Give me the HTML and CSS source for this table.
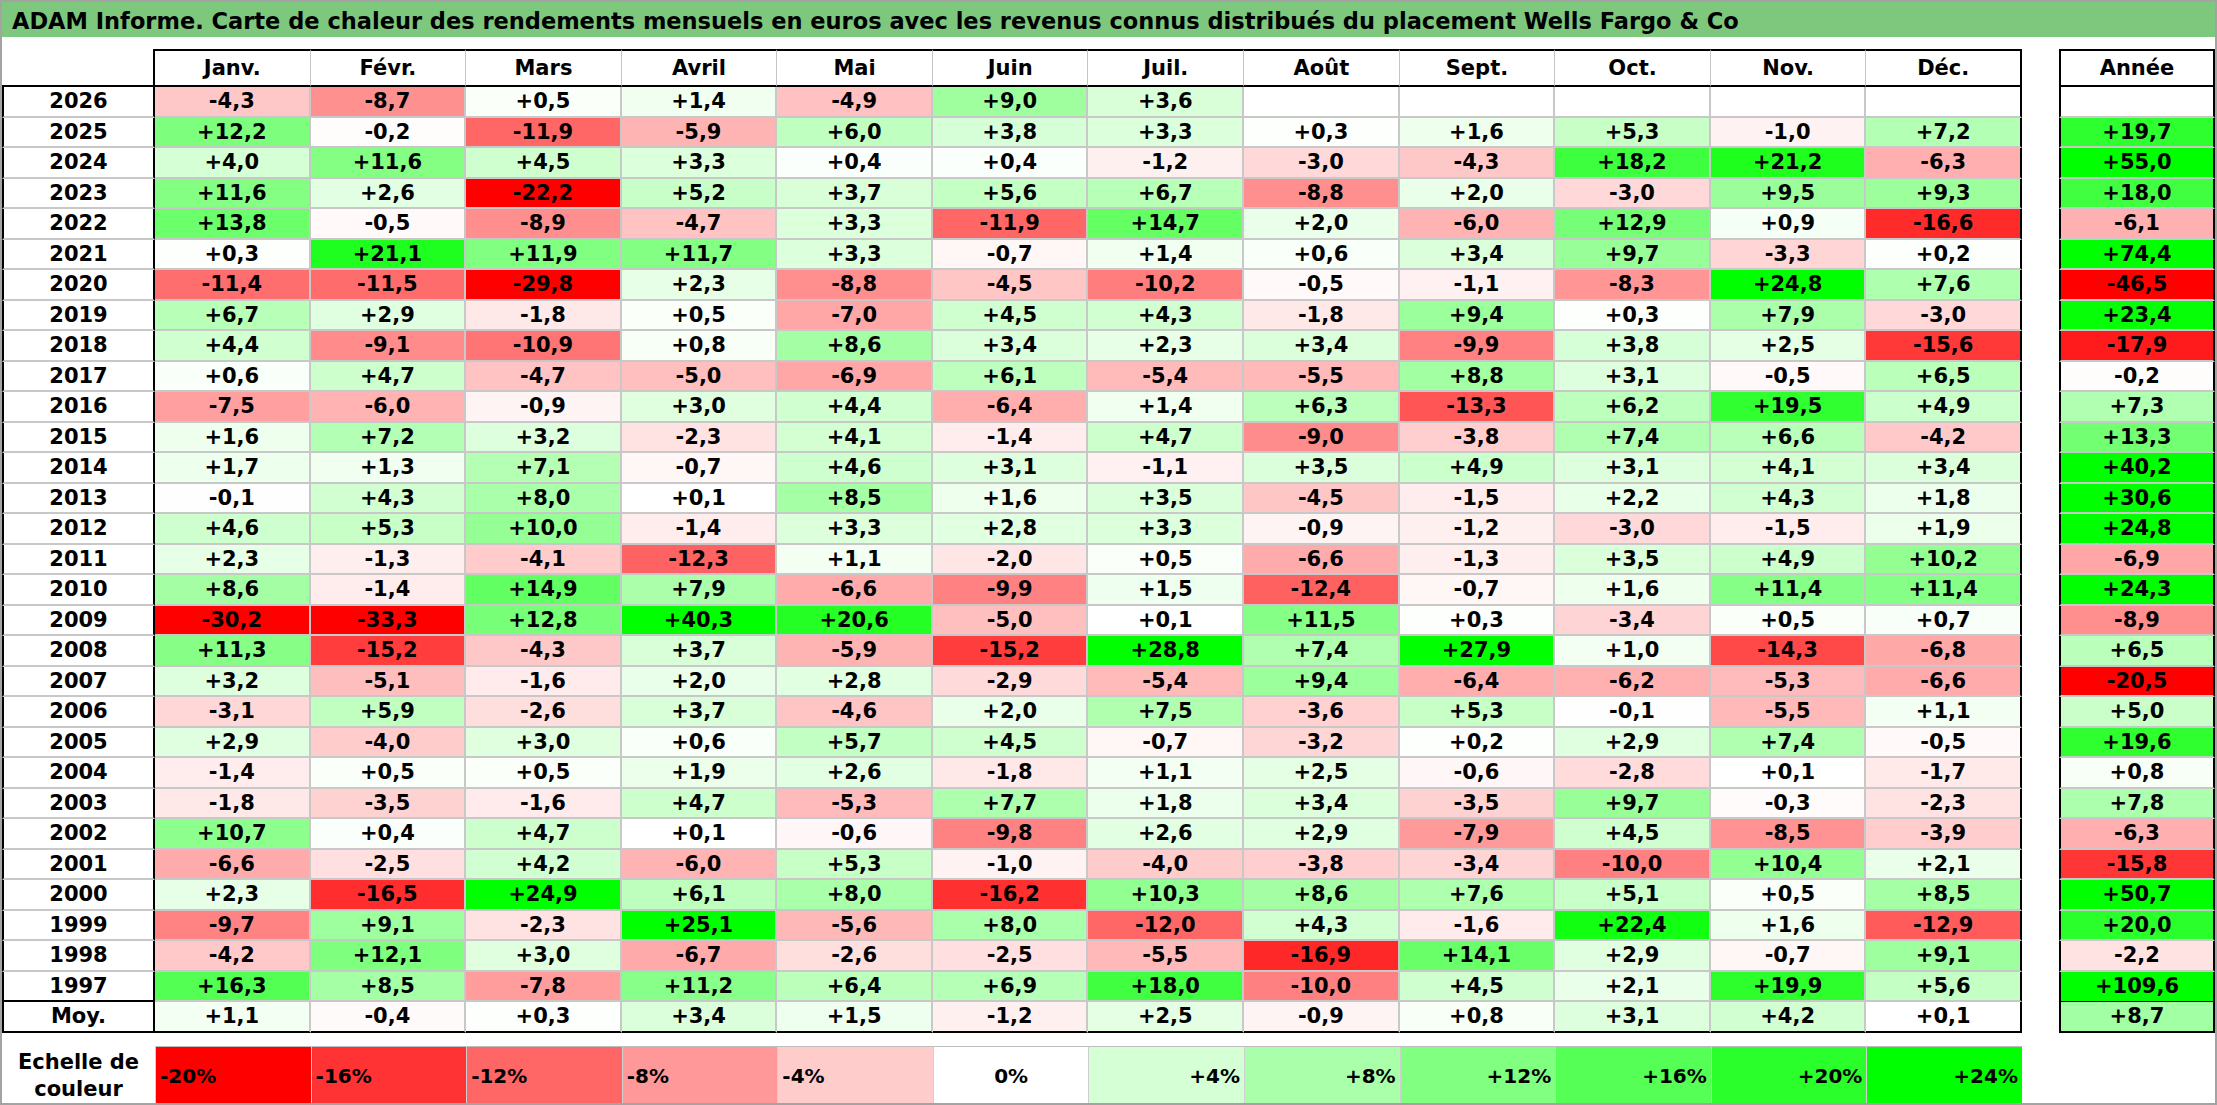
FILE: index.html
```html
<!DOCTYPE html>
<html lang="fr">
<head>
<meta charset="utf-8">
<title>ADAM Informe – Wells Fargo &amp; Co</title>
<link rel="stylesheet" href="styles.css">
</head>
<body>
<div class="page">
  <div class="title">ADAM Informe. Carte de chaleur des rendements mensuels en euros avec les revenus connus distribués du placement Wells Fargo &amp; Co</div>
  <div class="tables">
    <div class="grid main">
      <div class="corner"></div>
      <div class="mh">Janv.</div><div class="mh">Févr.</div><div class="mh">Mars</div><div class="mh">Avril</div><div class="mh">Mai</div><div class="mh">Juin</div><div class="mh">Juil.</div><div class="mh">Août</div><div class="mh">Sept.</div><div class="mh">Oct.</div><div class="mh">Nov.</div><div class="mh d">Déc.</div>

      <div class="yl">2026</div>
      <div class="c" style="--v:-4.3">-4,3</div><div class="c" style="--v:-8.7">-8,7</div><div class="c" style="--v:0.5">+0,5</div><div class="c" style="--v:1.4">+1,4</div><div class="c" style="--v:-4.9">-4,9</div><div class="c" style="--v:9.0">+9,0</div><div class="c" style="--v:3.6">+3,6</div><div class="c"></div><div class="c"></div><div class="c"></div><div class="c"></div><div class="c d"></div>

      <div class="yl">2025</div>
      <div class="c" style="--v:12.2">+12,2</div><div class="c" style="--v:-0.2">-0,2</div><div class="c" style="--v:-11.9">-11,9</div><div class="c" style="--v:-5.9">-5,9</div><div class="c" style="--v:6.0">+6,0</div><div class="c" style="--v:3.8">+3,8</div><div class="c" style="--v:3.3">+3,3</div><div class="c" style="--v:0.3">+0,3</div><div class="c" style="--v:1.6">+1,6</div><div class="c" style="--v:5.3">+5,3</div><div class="c" style="--v:-1.0">-1,0</div><div class="c d" style="--v:7.2">+7,2</div>

      <div class="yl">2024</div>
      <div class="c" style="--v:4.0">+4,0</div><div class="c" style="--v:11.6">+11,6</div><div class="c" style="--v:4.5">+4,5</div><div class="c" style="--v:3.3">+3,3</div><div class="c" style="--v:0.4">+0,4</div><div class="c" style="--v:0.4">+0,4</div><div class="c" style="--v:-1.2">-1,2</div><div class="c" style="--v:-3.0">-3,0</div><div class="c" style="--v:-4.3">-4,3</div><div class="c" style="--v:18.2">+18,2</div><div class="c" style="--v:21.2">+21,2</div><div class="c d" style="--v:-6.3">-6,3</div>

      <div class="yl">2023</div>
      <div class="c" style="--v:11.6">+11,6</div><div class="c" style="--v:2.6">+2,6</div><div class="c" style="--v:-22.2">-22,2</div><div class="c" style="--v:5.2">+5,2</div><div class="c" style="--v:3.7">+3,7</div><div class="c" style="--v:5.6">+5,6</div><div class="c" style="--v:6.7">+6,7</div><div class="c" style="--v:-8.8">-8,8</div><div class="c" style="--v:2.0">+2,0</div><div class="c" style="--v:-3.0">-3,0</div><div class="c" style="--v:9.5">+9,5</div><div class="c d" style="--v:9.3">+9,3</div>

      <div class="yl">2022</div>
      <div class="c" style="--v:13.8">+13,8</div><div class="c" style="--v:-0.5">-0,5</div><div class="c" style="--v:-8.9">-8,9</div><div class="c" style="--v:-4.7">-4,7</div><div class="c" style="--v:3.3">+3,3</div><div class="c" style="--v:-11.9">-11,9</div><div class="c" style="--v:14.7">+14,7</div><div class="c" style="--v:2.0">+2,0</div><div class="c" style="--v:-6.0">-6,0</div><div class="c" style="--v:12.9">+12,9</div><div class="c" style="--v:0.9">+0,9</div><div class="c d" style="--v:-16.6">-16,6</div>

      <div class="yl">2021</div>
      <div class="c" style="--v:0.3">+0,3</div><div class="c" style="--v:21.1">+21,1</div><div class="c" style="--v:11.9">+11,9</div><div class="c" style="--v:11.7">+11,7</div><div class="c" style="--v:3.3">+3,3</div><div class="c" style="--v:-0.7">-0,7</div><div class="c" style="--v:1.4">+1,4</div><div class="c" style="--v:0.6">+0,6</div><div class="c" style="--v:3.4">+3,4</div><div class="c" style="--v:9.7">+9,7</div><div class="c" style="--v:-3.3">-3,3</div><div class="c d" style="--v:0.2">+0,2</div>

      <div class="yl">2020</div>
      <div class="c" style="--v:-11.4">-11,4</div><div class="c" style="--v:-11.5">-11,5</div><div class="c" style="--v:-29.8">-29,8</div><div class="c" style="--v:2.3">+2,3</div><div class="c" style="--v:-8.8">-8,8</div><div class="c" style="--v:-4.5">-4,5</div><div class="c" style="--v:-10.2">-10,2</div><div class="c" style="--v:-0.5">-0,5</div><div class="c" style="--v:-1.1">-1,1</div><div class="c" style="--v:-8.3">-8,3</div><div class="c" style="--v:24.8">+24,8</div><div class="c d" style="--v:7.6">+7,6</div>

      <div class="yl">2019</div>
      <div class="c" style="--v:6.7">+6,7</div><div class="c" style="--v:2.9">+2,9</div><div class="c" style="--v:-1.8">-1,8</div><div class="c" style="--v:0.5">+0,5</div><div class="c" style="--v:-7.0">-7,0</div><div class="c" style="--v:4.5">+4,5</div><div class="c" style="--v:4.3">+4,3</div><div class="c" style="--v:-1.8">-1,8</div><div class="c" style="--v:9.4">+9,4</div><div class="c" style="--v:0.3">+0,3</div><div class="c" style="--v:7.9">+7,9</div><div class="c d" style="--v:-3.0">-3,0</div>

      <div class="yl">2018</div>
      <div class="c" style="--v:4.4">+4,4</div><div class="c" style="--v:-9.1">-9,1</div><div class="c" style="--v:-10.9">-10,9</div><div class="c" style="--v:0.8">+0,8</div><div class="c" style="--v:8.6">+8,6</div><div class="c" style="--v:3.4">+3,4</div><div class="c" style="--v:2.3">+2,3</div><div class="c" style="--v:3.4">+3,4</div><div class="c" style="--v:-9.9">-9,9</div><div class="c" style="--v:3.8">+3,8</div><div class="c" style="--v:2.5">+2,5</div><div class="c d" style="--v:-15.6">-15,6</div>

      <div class="yl">2017</div>
      <div class="c" style="--v:0.6">+0,6</div><div class="c" style="--v:4.7">+4,7</div><div class="c" style="--v:-4.7">-4,7</div><div class="c" style="--v:-5.0">-5,0</div><div class="c" style="--v:-6.9">-6,9</div><div class="c" style="--v:6.1">+6,1</div><div class="c" style="--v:-5.4">-5,4</div><div class="c" style="--v:-5.5">-5,5</div><div class="c" style="--v:8.8">+8,8</div><div class="c" style="--v:3.1">+3,1</div><div class="c" style="--v:-0.5">-0,5</div><div class="c d" style="--v:6.5">+6,5</div>

      <div class="yl">2016</div>
      <div class="c" style="--v:-7.5">-7,5</div><div class="c" style="--v:-6.0">-6,0</div><div class="c" style="--v:-0.9">-0,9</div><div class="c" style="--v:3.0">+3,0</div><div class="c" style="--v:4.4">+4,4</div><div class="c" style="--v:-6.4">-6,4</div><div class="c" style="--v:1.4">+1,4</div><div class="c" style="--v:6.3">+6,3</div><div class="c" style="--v:-13.3">-13,3</div><div class="c" style="--v:6.2">+6,2</div><div class="c" style="--v:19.5">+19,5</div><div class="c d" style="--v:4.9">+4,9</div>

      <div class="yl">2015</div>
      <div class="c" style="--v:1.6">+1,6</div><div class="c" style="--v:7.2">+7,2</div><div class="c" style="--v:3.2">+3,2</div><div class="c" style="--v:-2.3">-2,3</div><div class="c" style="--v:4.1">+4,1</div><div class="c" style="--v:-1.4">-1,4</div><div class="c" style="--v:4.7">+4,7</div><div class="c" style="--v:-9.0">-9,0</div><div class="c" style="--v:-3.8">-3,8</div><div class="c" style="--v:7.4">+7,4</div><div class="c" style="--v:6.6">+6,6</div><div class="c d" style="--v:-4.2">-4,2</div>

      <div class="yl">2014</div>
      <div class="c" style="--v:1.7">+1,7</div><div class="c" style="--v:1.3">+1,3</div><div class="c" style="--v:7.1">+7,1</div><div class="c" style="--v:-0.7">-0,7</div><div class="c" style="--v:4.6">+4,6</div><div class="c" style="--v:3.1">+3,1</div><div class="c" style="--v:-1.1">-1,1</div><div class="c" style="--v:3.5">+3,5</div><div class="c" style="--v:4.9">+4,9</div><div class="c" style="--v:3.1">+3,1</div><div class="c" style="--v:4.1">+4,1</div><div class="c d" style="--v:3.4">+3,4</div>

      <div class="yl">2013</div>
      <div class="c" style="--v:-0.1">-0,1</div><div class="c" style="--v:4.3">+4,3</div><div class="c" style="--v:8.0">+8,0</div><div class="c" style="--v:0.1">+0,1</div><div class="c" style="--v:8.5">+8,5</div><div class="c" style="--v:1.6">+1,6</div><div class="c" style="--v:3.5">+3,5</div><div class="c" style="--v:-4.5">-4,5</div><div class="c" style="--v:-1.5">-1,5</div><div class="c" style="--v:2.2">+2,2</div><div class="c" style="--v:4.3">+4,3</div><div class="c d" style="--v:1.8">+1,8</div>

      <div class="yl">2012</div>
      <div class="c" style="--v:4.6">+4,6</div><div class="c" style="--v:5.3">+5,3</div><div class="c" style="--v:10.0">+10,0</div><div class="c" style="--v:-1.4">-1,4</div><div class="c" style="--v:3.3">+3,3</div><div class="c" style="--v:2.8">+2,8</div><div class="c" style="--v:3.3">+3,3</div><div class="c" style="--v:-0.9">-0,9</div><div class="c" style="--v:-1.2">-1,2</div><div class="c" style="--v:-3.0">-3,0</div><div class="c" style="--v:-1.5">-1,5</div><div class="c d" style="--v:1.9">+1,9</div>

      <div class="yl">2011</div>
      <div class="c" style="--v:2.3">+2,3</div><div class="c" style="--v:-1.3">-1,3</div><div class="c" style="--v:-4.1">-4,1</div><div class="c" style="--v:-12.3">-12,3</div><div class="c" style="--v:1.1">+1,1</div><div class="c" style="--v:-2.0">-2,0</div><div class="c" style="--v:0.5">+0,5</div><div class="c" style="--v:-6.6">-6,6</div><div class="c" style="--v:-1.3">-1,3</div><div class="c" style="--v:3.5">+3,5</div><div class="c" style="--v:4.9">+4,9</div><div class="c d" style="--v:10.2">+10,2</div>

      <div class="yl">2010</div>
      <div class="c" style="--v:8.6">+8,6</div><div class="c" style="--v:-1.4">-1,4</div><div class="c" style="--v:14.9">+14,9</div><div class="c" style="--v:7.9">+7,9</div><div class="c" style="--v:-6.6">-6,6</div><div class="c" style="--v:-9.9">-9,9</div><div class="c" style="--v:1.5">+1,5</div><div class="c" style="--v:-12.4">-12,4</div><div class="c" style="--v:-0.7">-0,7</div><div class="c" style="--v:1.6">+1,6</div><div class="c" style="--v:11.4">+11,4</div><div class="c d" style="--v:11.4">+11,4</div>

      <div class="yl">2009</div>
      <div class="c" style="--v:-30.2">-30,2</div><div class="c" style="--v:-33.3">-33,3</div><div class="c" style="--v:12.8">+12,8</div><div class="c" style="--v:40.3">+40,3</div><div class="c" style="--v:20.6">+20,6</div><div class="c" style="--v:-5.0">-5,0</div><div class="c" style="--v:0.1">+0,1</div><div class="c" style="--v:11.5">+11,5</div><div class="c" style="--v:0.3">+0,3</div><div class="c" style="--v:-3.4">-3,4</div><div class="c" style="--v:0.5">+0,5</div><div class="c d" style="--v:0.7">+0,7</div>

      <div class="yl">2008</div>
      <div class="c" style="--v:11.3">+11,3</div><div class="c" style="--v:-15.2">-15,2</div><div class="c" style="--v:-4.3">-4,3</div><div class="c" style="--v:3.7">+3,7</div><div class="c" style="--v:-5.9">-5,9</div><div class="c" style="--v:-15.2">-15,2</div><div class="c" style="--v:28.8">+28,8</div><div class="c" style="--v:7.4">+7,4</div><div class="c" style="--v:27.9">+27,9</div><div class="c" style="--v:1.0">+1,0</div><div class="c" style="--v:-14.3">-14,3</div><div class="c d" style="--v:-6.8">-6,8</div>

      <div class="yl">2007</div>
      <div class="c" style="--v:3.2">+3,2</div><div class="c" style="--v:-5.1">-5,1</div><div class="c" style="--v:-1.6">-1,6</div><div class="c" style="--v:2.0">+2,0</div><div class="c" style="--v:2.8">+2,8</div><div class="c" style="--v:-2.9">-2,9</div><div class="c" style="--v:-5.4">-5,4</div><div class="c" style="--v:9.4">+9,4</div><div class="c" style="--v:-6.4">-6,4</div><div class="c" style="--v:-6.2">-6,2</div><div class="c" style="--v:-5.3">-5,3</div><div class="c d" style="--v:-6.6">-6,6</div>

      <div class="yl">2006</div>
      <div class="c" style="--v:-3.1">-3,1</div><div class="c" style="--v:5.9">+5,9</div><div class="c" style="--v:-2.6">-2,6</div><div class="c" style="--v:3.7">+3,7</div><div class="c" style="--v:-4.6">-4,6</div><div class="c" style="--v:2.0">+2,0</div><div class="c" style="--v:7.5">+7,5</div><div class="c" style="--v:-3.6">-3,6</div><div class="c" style="--v:5.3">+5,3</div><div class="c" style="--v:-0.1">-0,1</div><div class="c" style="--v:-5.5">-5,5</div><div class="c d" style="--v:1.1">+1,1</div>

      <div class="yl">2005</div>
      <div class="c" style="--v:2.9">+2,9</div><div class="c" style="--v:-4.0">-4,0</div><div class="c" style="--v:3.0">+3,0</div><div class="c" style="--v:0.6">+0,6</div><div class="c" style="--v:5.7">+5,7</div><div class="c" style="--v:4.5">+4,5</div><div class="c" style="--v:-0.7">-0,7</div><div class="c" style="--v:-3.2">-3,2</div><div class="c" style="--v:0.2">+0,2</div><div class="c" style="--v:2.9">+2,9</div><div class="c" style="--v:7.4">+7,4</div><div class="c d" style="--v:-0.5">-0,5</div>

      <div class="yl">2004</div>
      <div class="c" style="--v:-1.4">-1,4</div><div class="c" style="--v:0.5">+0,5</div><div class="c" style="--v:0.5">+0,5</div><div class="c" style="--v:1.9">+1,9</div><div class="c" style="--v:2.6">+2,6</div><div class="c" style="--v:-1.8">-1,8</div><div class="c" style="--v:1.1">+1,1</div><div class="c" style="--v:2.5">+2,5</div><div class="c" style="--v:-0.6">-0,6</div><div class="c" style="--v:-2.8">-2,8</div><div class="c" style="--v:0.1">+0,1</div><div class="c d" style="--v:-1.7">-1,7</div>

      <div class="yl">2003</div>
      <div class="c" style="--v:-1.8">-1,8</div><div class="c" style="--v:-3.5">-3,5</div><div class="c" style="--v:-1.6">-1,6</div><div class="c" style="--v:4.7">+4,7</div><div class="c" style="--v:-5.3">-5,3</div><div class="c" style="--v:7.7">+7,7</div><div class="c" style="--v:1.8">+1,8</div><div class="c" style="--v:3.4">+3,4</div><div class="c" style="--v:-3.5">-3,5</div><div class="c" style="--v:9.7">+9,7</div><div class="c" style="--v:-0.3">-0,3</div><div class="c d" style="--v:-2.3">-2,3</div>

      <div class="yl">2002</div>
      <div class="c" style="--v:10.7">+10,7</div><div class="c" style="--v:0.4">+0,4</div><div class="c" style="--v:4.7">+4,7</div><div class="c" style="--v:0.1">+0,1</div><div class="c" style="--v:-0.6">-0,6</div><div class="c" style="--v:-9.8">-9,8</div><div class="c" style="--v:2.6">+2,6</div><div class="c" style="--v:2.9">+2,9</div><div class="c" style="--v:-7.9">-7,9</div><div class="c" style="--v:4.5">+4,5</div><div class="c" style="--v:-8.5">-8,5</div><div class="c d" style="--v:-3.9">-3,9</div>

      <div class="yl">2001</div>
      <div class="c" style="--v:-6.6">-6,6</div><div class="c" style="--v:-2.5">-2,5</div><div class="c" style="--v:4.2">+4,2</div><div class="c" style="--v:-6.0">-6,0</div><div class="c" style="--v:5.3">+5,3</div><div class="c" style="--v:-1.0">-1,0</div><div class="c" style="--v:-4.0">-4,0</div><div class="c" style="--v:-3.8">-3,8</div><div class="c" style="--v:-3.4">-3,4</div><div class="c" style="--v:-10.0">-10,0</div><div class="c" style="--v:10.4">+10,4</div><div class="c d" style="--v:2.1">+2,1</div>

      <div class="yl">2000</div>
      <div class="c" style="--v:2.3">+2,3</div><div class="c" style="--v:-16.5">-16,5</div><div class="c" style="--v:24.9">+24,9</div><div class="c" style="--v:6.1">+6,1</div><div class="c" style="--v:8.0">+8,0</div><div class="c" style="--v:-16.2">-16,2</div><div class="c" style="--v:10.3">+10,3</div><div class="c" style="--v:8.6">+8,6</div><div class="c" style="--v:7.6">+7,6</div><div class="c" style="--v:5.1">+5,1</div><div class="c" style="--v:0.5">+0,5</div><div class="c d" style="--v:8.5">+8,5</div>

      <div class="yl">1999</div>
      <div class="c" style="--v:-9.7">-9,7</div><div class="c" style="--v:9.1">+9,1</div><div class="c" style="--v:-2.3">-2,3</div><div class="c" style="--v:25.1">+25,1</div><div class="c" style="--v:-5.6">-5,6</div><div class="c" style="--v:8.0">+8,0</div><div class="c" style="--v:-12.0">-12,0</div><div class="c" style="--v:4.3">+4,3</div><div class="c" style="--v:-1.6">-1,6</div><div class="c" style="--v:22.4">+22,4</div><div class="c" style="--v:1.6">+1,6</div><div class="c d" style="--v:-12.9">-12,9</div>

      <div class="yl">1998</div>
      <div class="c" style="--v:-4.2">-4,2</div><div class="c" style="--v:12.1">+12,1</div><div class="c" style="--v:3.0">+3,0</div><div class="c" style="--v:-6.7">-6,7</div><div class="c" style="--v:-2.6">-2,6</div><div class="c" style="--v:-2.5">-2,5</div><div class="c" style="--v:-5.5">-5,5</div><div class="c" style="--v:-16.9">-16,9</div><div class="c" style="--v:14.1">+14,1</div><div class="c" style="--v:2.9">+2,9</div><div class="c" style="--v:-0.7">-0,7</div><div class="c d" style="--v:9.1">+9,1</div>

      <div class="yl last">1997</div>
      <div class="c" style="--v:16.3">+16,3</div><div class="c" style="--v:8.5">+8,5</div><div class="c" style="--v:-7.8">-7,8</div><div class="c" style="--v:11.2">+11,2</div><div class="c" style="--v:6.4">+6,4</div><div class="c" style="--v:6.9">+6,9</div><div class="c" style="--v:18.0">+18,0</div><div class="c" style="--v:-10.0">-10,0</div><div class="c" style="--v:4.5">+4,5</div><div class="c" style="--v:2.1">+2,1</div><div class="c" style="--v:19.9">+19,9</div><div class="c d" style="--v:5.6">+5,6</div>

      <div class="yl moy">Moy.</div>
      <div class="c m" style="--v:1.1">+1,1</div><div class="c m" style="--v:-0.4">-0,4</div><div class="c m" style="--v:0.3">+0,3</div><div class="c m" style="--v:3.4">+3,4</div><div class="c m" style="--v:1.5">+1,5</div><div class="c m" style="--v:-1.2">-1,2</div><div class="c m" style="--v:2.5">+2,5</div><div class="c m" style="--v:-0.9">-0,9</div><div class="c m" style="--v:0.8">+0,8</div><div class="c m" style="--v:3.1">+3,1</div><div class="c m" style="--v:4.2">+4,2</div><div class="c d m" style="--v:0.1">+0,1</div>
    </div>

    <div class="grid year">
      <div class="yh">Année</div>
      <div class="y"></div>
      <div class="y" style="--v:19.7">+19,7</div>
      <div class="y" style="--v:55.0">+55,0</div>
      <div class="y" style="--v:18.0">+18,0</div>
      <div class="y" style="--v:-6.1">-6,1</div>
      <div class="y" style="--v:74.4">+74,4</div>
      <div class="y" style="--v:-46.5">-46,5</div>
      <div class="y" style="--v:23.4">+23,4</div>
      <div class="y" style="--v:-17.9">-17,9</div>
      <div class="y" style="--v:-0.2">-0,2</div>
      <div class="y" style="--v:7.3">+7,3</div>
      <div class="y" style="--v:13.3">+13,3</div>
      <div class="y" style="--v:40.2">+40,2</div>
      <div class="y" style="--v:30.6">+30,6</div>
      <div class="y" style="--v:24.8">+24,8</div>
      <div class="y" style="--v:-6.9">-6,9</div>
      <div class="y" style="--v:24.3">+24,3</div>
      <div class="y" style="--v:-8.9">-8,9</div>
      <div class="y" style="--v:6.5">+6,5</div>
      <div class="y" style="--v:-20.5">-20,5</div>
      <div class="y" style="--v:5.0">+5,0</div>
      <div class="y" style="--v:19.6">+19,6</div>
      <div class="y" style="--v:0.8">+0,8</div>
      <div class="y" style="--v:7.8">+7,8</div>
      <div class="y" style="--v:-6.3">-6,3</div>
      <div class="y" style="--v:-15.8">-15,8</div>
      <div class="y" style="--v:50.7">+50,7</div>
      <div class="y" style="--v:20.0">+20,0</div>
      <div class="y" style="--v:-2.2">-2,2</div>
      <div class="y last" style="--v:109.6">+109,6</div>
      <div class="y m" style="--v:8.7">+8,7</div>
    </div>
  </div>

  <div class="legend">
    <div class="lab">Echelle de<br>couleur</div>
    <div class="lc neg" style="--v:-20">-20%</div>
    <div class="lc neg" style="--v:-16">-16%</div>
    <div class="lc neg" style="--v:-12">-12%</div>
    <div class="lc neg" style="--v:-8">-8%</div>
    <div class="lc neg" style="--v:-4">-4%</div>
    <div class="lc zero" style="--v:0">0%</div>
    <div class="lc pos" style="--v:4">+4%</div>
    <div class="lc pos" style="--v:8">+8%</div>
    <div class="lc pos" style="--v:12">+12%</div>
    <div class="lc pos" style="--v:16">+16%</div>
    <div class="lc pos" style="--v:20">+20%</div>
    <div class="lc pos" style="--v:24">+24%</div>
  </div>
</div>
</body>
</html>
```

FILE: styles.css
```css
* { box-sizing: border-box; }

html, body {
  margin: 0;
  padding: 0;
  background: #ffffff;
}

body {
  font-family: "DejaVu Sans", "Open Sans", sans-serif;
  font-weight: bold;
  color: #000000;
}

.page {
  width: 2217px;
  height: 1105px;
  border: 2px solid #a3a3a3;
  display: flex;
  flex-direction: column;
}

.title {
  height: 35px;
  background: #7ec87e;
  padding-left: 10px;
  font-size: 22.5px;
  line-height: 38px;
  white-space: nowrap;
  overflow: hidden;
}

.tables {
  display: flex;
  gap: 37px;
  margin-top: 12px;
}

.grid {
  display: grid;
  grid-template-rows: 38px repeat(31, 30.5px);
  font-size: 21px;
}

.main {
  width: 2020px;
  grid-template-columns: 153px repeat(12, 1fr);
}

.year {
  width: 156px;
  grid-template-columns: 1fr;
}

.grid > div {
  display: flex;
  align-items: center;
  justify-content: center;
  white-space: nowrap;
}

/* heat colour computed from the cell value (--v) */
.c, .y, .lc {
  --n: clamp(0, calc(var(--v) / -20), 1);
  --p: clamp(0, calc(var(--v) / 24), 1);
  background-color: rgb(calc(255 * (1 - var(--p))), calc(255 * (1 - var(--n))), calc(255 * (1 - var(--n) - var(--p))));
}

/* main table borders */
.corner {
  border-right: 2px solid #000;
  border-bottom: 2px solid #000;
}

.mh {
  border-top: 2px solid #000;
  border-bottom: 2px solid #000;
  border-right: 1px solid #c4c4c4;
}

.mh.d { border-right: 2px solid #000; }

.yl {
  border-left: 2px solid #000;
  border-right: 2px solid #000;
  border-bottom: 2px solid #c8c8c8;
}

.yl.last { border-bottom: 2px solid #000; }
.yl.moy { border-bottom: 2px solid #000; }

.c {
  border-right: 2px solid #c8c8c8;
  border-bottom: 2px solid #c8c8c8;
}

.c.d { border-right: 2px solid #000; }
.c.m { border-bottom: 2px solid #000; }

/* year table */
.yh {
  border: 2px solid #000;
}

.y {
  border-left: 2px solid #000;
  border-right: 2px solid #000;
  border-bottom: 2px solid #c8c8c8;
}

.y.last { border-bottom: 1px solid #000; }
.y.m { border-bottom: 2px solid #000; }

/* legend */
.legend {
  display: grid;
  width: 2020px;
  height: 57px;
  margin-top: 13.5px;
  grid-template-columns: 153px repeat(12, 1fr);
  font-size: 20px;
}

.lab {
  display: flex;
  align-items: center;
  justify-content: center;
  text-align: center;
  font-size: 21px;
  line-height: 27px;
  padding-top: 2px;
}

.lc {
  display: flex;
  align-items: center;
  border-top: 1px solid #bdbdbd;
  border-left: 1px solid #cfcfcf;
  padding: 2px 4px 0 4px;
}

.lc.neg { justify-content: flex-start; }
.lc.zero { justify-content: center; }
.lc.pos { justify-content: flex-end; }
```
